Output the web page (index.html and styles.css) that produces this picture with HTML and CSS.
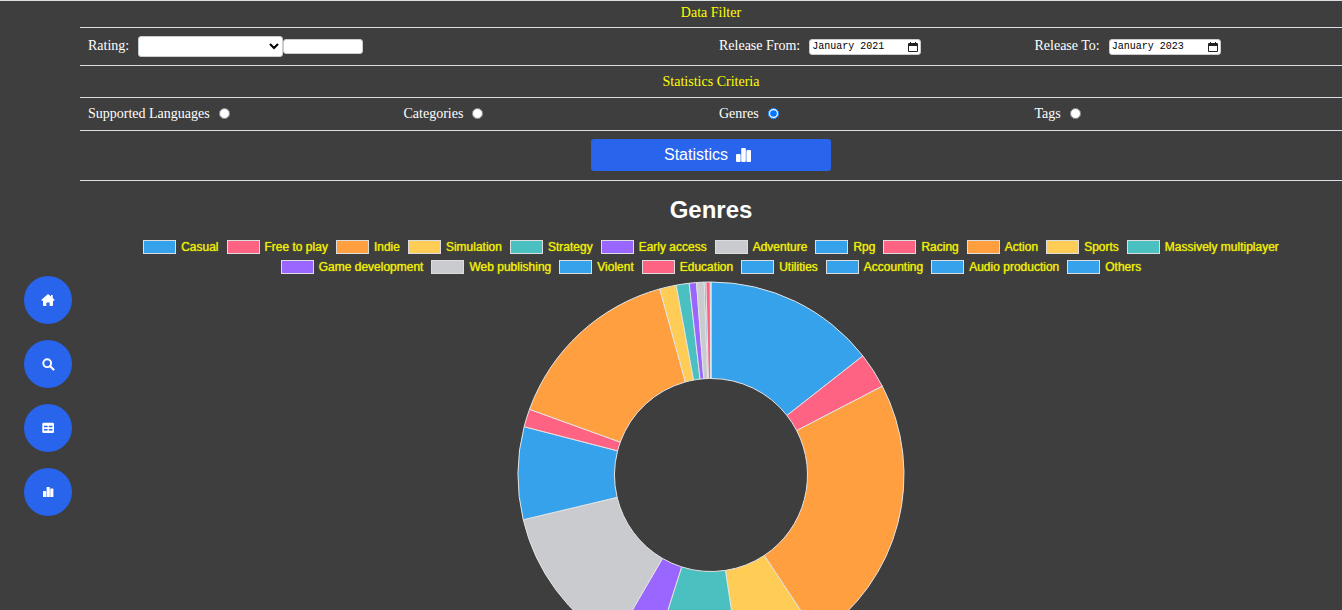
FILE: index.html
```html
<!DOCTYPE html>
<html lang="en">
<head>
<meta charset="utf-8">
<meta name="viewport" content="width=device-width, initial-scale=1">
<title>Statistics</title>
<link rel="stylesheet" href="styles.css">
</head>
<body>
<nav class="side-nav" aria-label="Main">
  <a class="nav-link" href="#home" aria-label="Home"><svg class="nav-icon" viewBox="0 0 14 14"><path d="M7 .9.500 6.700q-.2.900.6 1H2v4.400q0 .9.900.9h2.500V9.400h3.200V13h2.500q.9 0 .9-.9V7.700h.9q.8-.1.600-1L11.700 5V1.900h-1.700v1.600z"/></svg></a>
  <a class="nav-link" href="#search" aria-label="Search"><svg class="nav-icon" viewBox="0 0 14 14"><circle cx="6.200" cy="6.200" r="3.900" fill="none" stroke="#fff" stroke-width="1.900"/><path d="m9.200 9.200 3.300 3.300" stroke="#fff" stroke-width="2.200" stroke-linecap="round"/></svg></a>
  <a class="nav-link" href="#table" aria-label="Table"><svg class="nav-icon" viewBox="0 0 14 14"><path fill-rule="evenodd" d="M2.500 1.700h9.300Q13 1.700 13 3v7.700q0 1.300-1.200 1.300H2.500q-1.200 0-1.200-1.300V3q0-1.300 1.200-1.300zM3 4.800v1.400h3.600V4.800zm4.800 0v1.400h3.700V4.800zM3 8v1.400h3.600V8zm4.800 0v1.400h3.700V8z"/></svg></a>
  <a class="nav-link" href="#statistics" aria-label="Statistics"><svg class="nav-icon" viewBox="0 0 14 14"><rect x="2" y="6" width="3.200" height="6" rx=".6"/><rect x="5.600" y="2" width="3.200" height="10" rx=".6"/><rect x="9.200" y="3.500" width="3.200" height="8.500" rx=".6"/></svg></a>
</nav>
<main class="page">
  <form class="filters">
    <h2 class="row section-title">Data Filter</h2>
    <div class="row grid controls">
      <div class="field span-two">
        <label for="rating">Rating:</label>
        <div class="pair">
          <select id="rating" class="box rating"><option></option><option>Greater than</option><option>Less than</option></select><input class="box amount" type="text" aria-label="Rating value">
        </div>
      </div>
      <div class="field"><label for="from">Release From:</label><div class="box month"><input id="from" class="month-text" type="text" value="January 2021"><svg class="calendar" viewBox="0 0 10 10"><path fill-rule="evenodd" d="M1 1h1V0h1v1h4V0h1v1h1q1 0 1 1v7q0 1-1 1H1q-1 0-1-1V2q0-1 1-1zm0 3v5h8V4z"/></svg></div></div>
      <div class="field"><label for="to">Release To:</label><div class="box month"><input id="to" class="month-text" type="text" value="January 2023"><svg class="calendar" viewBox="0 0 10 10"><path fill-rule="evenodd" d="M1 1h1V0h1v1h4V0h1v1h1q1 0 1 1v7q0 1-1 1H1q-1 0-1-1V2q0-1 1-1zm0 3v5h8V4z"/></svg></div></div>
    </div>
    <h2 class="row section-title criteria-title">Statistics Criteria</h2>
    <div class="row grid criteria">
      <div class="field"><label for="languages">Supported Languages</label><input id="languages" class="radio" type="radio" name="criteria"></div>
      <div class="field"><label for="categories">Categories</label><input id="categories" class="radio" type="radio" name="criteria"></div>
      <div class="field"><label for="genres">Genres</label><input id="genres" class="radio" type="radio" name="criteria" checked></div>
      <div class="field"><label for="tags">Tags</label><input id="tags" class="radio" type="radio" name="criteria"></div>
    </div>
    <div class="row actions">
      <button class="submit" type="button">Statistics
        <svg class="submit-icon" viewBox="0 0 16 16"><rect x="0" y="7" width="4.600" height="8" rx="1"/><rect x="5.200" y="1" width="4.600" height="14" rx="1"/><rect x="10.400" y="3" width="4.600" height="12" rx="1"/></svg>
      </button>
    </div>
  </form>
  <section class="chart">
    <h1 class="chart-title">Genres</h1>
    <ul class="legend">
      <li class="item blue">Casual</li><li class="item pink">Free to play</li><li class="item orange">Indie</li><li class="item yellow">Simulation</li><li class="item teal">Strategy</li><li class="item purple">Early access</li><li class="item grey">Adventure</li><li class="item blue">Rpg</li><li class="item pink">Racing</li><li class="item orange">Action</li><li class="item yellow">Sports</li><li class="item teal">Massively multiplayer</li><li class="item purple">Game development</li><li class="item grey">Web publishing</li><li class="item blue">Violent</li><li class="item pink">Education</li><li class="item blue">Utilities</li><li class="item blue">Accounting</li><li class="item blue">Audio production</li><li class="item blue">Others</li>
    </ul>
    <svg class="donut" id="donut" viewBox="-194 -194 388 388" role="img" aria-label="Share of games by genre"></svg>
  </section>
</main>
<script src="chart.js"></script>
</body>
</html>
```
FILE: styles.css
```css
* { box-sizing: border-box; }

body {
  margin: 0;
  background: #3e3e3e;
  color: #fff;
  font-family: "Liberation Serif", "Times New Roman", serif;
  font-size: 14px;
  line-height: 20px;
  border-top: 1px solid #dcdfdf;
}

.side-nav {
  position: fixed;
  left: 24px;
  top: 276px;
  display: flex;
  flex-direction: column;
  gap: 16px;
}

.nav-link {
  display: flex;
  align-items: center;
  justify-content: center;
  width: 48px;
  height: 48px;
  border-radius: 50%;
  background: #2964ec;
}

.nav-icon { width: 14px; height: 14px; fill: #fff; }

.page { margin-left: 80px; }

.row {
  margin: 0;
  border-bottom: 1px solid #dcdfdf;
}

.section-title {
  padding: 2px 0 4px;
  color: #ff0;
  font-size: 14px;
  font-weight: 400;
  text-align: center;
}

.criteria-title { padding: 6px 0 5px; }

.grid {
  display: grid;
  grid-template-columns: repeat(4, 1fr);
}

.field {
  display: flex;
  align-items: center;
  gap: 9px;
  padding: 0 8px;
}

.span-two { grid-column: span 2; }

.controls { padding: 8px 0; }
.controls label { align-self: flex-start; }
.criteria { padding: 6px 0; }

.pair { display: flex; align-items: center; }

.box {
  margin: 0;
  border: 1px solid #ccc;
  border-radius: 3px;
  background: #fff;
  color: #000;
}

.rating { width: 145px; height: 21px; }
.amount { width: 80px; height: 15px; }

.month {
  display: flex;
  align-items: center;
  width: 112px;
  height: 16px;
  padding: 0 2px;
}

.month-text {
  flex: 1;
  min-width: 0;
  height: 14px;
  padding: 0;
  border: 0;
  background: none;
  color: #000;
  font-family: "Liberation Mono", monospace;
  font-size: 10px;
}

.calendar { width: 10px; height: 10px; fill: #222; }

.radio {
  width: 11px;
  height: 11px;
  margin: 0 0 2px;
}

.actions {
  display: flex;
  justify-content: center;
  padding: 8px 0 9px;
}

.submit {
  display: flex;
  align-items: center;
  justify-content: center;
  gap: 8px;
  width: 240px;
  height: 32px;
  padding: 0 6px 0 0;
  border: 0;
  border-radius: 3px;
  background: #2964ec;
  color: #fff;
  font-family: "Liberation Sans", Arial, sans-serif;
  font-size: 16px;
}

.submit-icon { width: 16px; height: 16px; fill: #fff; }

.chart {
  display: flex;
  flex-direction: column;
  align-items: center;
  padding-top: 14px;
  font-family: "Liberation Sans", Arial, sans-serif;
}

.chart-title {
  margin: 0;
  font-size: 24px;
  line-height: 30px;
}

.legend {
  display: flex;
  flex-wrap: wrap;
  justify-content: center;
  column-gap: 8px;
  max-width: 1180px;
  margin: 12px 0 4px;
  padding: 0;
  list-style: none;
  color: #eded0a;
  font-size: 12px;
  text-shadow: 0 0 1px #eded0a;
}

.item { display: flex; align-items: center; gap: 5px; }

.item::before {
  content: "";
  width: 31px;
  height: 12px;
  border: 1px solid #ddd;
  background: var(--tone);
}

.blue { --tone: #36a2eb; }
.pink { --tone: #ff6384; }
.orange { --tone: #ff9f40; }
.yellow { --tone: #ffcd56; }
.teal { --tone: #4bc0c0; }
.purple { --tone: #9966ff; }
.grey { --tone: #c9cbcf; }

.donut { width: 388px; }

.slice {
  fill: var(--tone);
  stroke: #e4e4e4;
  stroke-width: 1px;
}
```
FILE: chart.js
```js
// Each slice: colour class and the clockwise angle, in degrees, where it ends.
const slices = [
  ["blue", 51.9], ["pink", 62.6], ["orange", 146.5], ["yellow", 171.4],
  ["teal", 197.7], ["purple", 210.2], ["grey", 256.6], ["blue", 284.5],
  ["pink", 289.9], ["orange", 344.6], ["yellow", 349.6], ["teal", 353.5],
  ["purple", 355.7], ["grey", 358], ["blue", 358.5], ["pink", 359.8],
  ["blue", 360]
];
const outer = 193;
const inner = 96.5;

function point(radius, degrees) {
  const a = degrees * Math.PI / 180;
  return `${radius * Math.sin(a)} ${-radius * Math.cos(a)}`;
}

const donut = document.getElementById("donut");
let start = 0;
for (const [tone, end] of slices) {
  const path = document.createElementNS("http://www.w3.org/2000/svg", "path");
  path.setAttribute("class", `slice ${tone}`);
  path.setAttribute("d",
    `M${point(outer, start)}A${outer} ${outer} 0 0 1 ${point(outer, end)}` +
    `L${point(inner, end)}A${inner} ${inner} 0 0 0 ${point(inner, start)}Z`);
  donut.append(path);
  start = end;
}
```
